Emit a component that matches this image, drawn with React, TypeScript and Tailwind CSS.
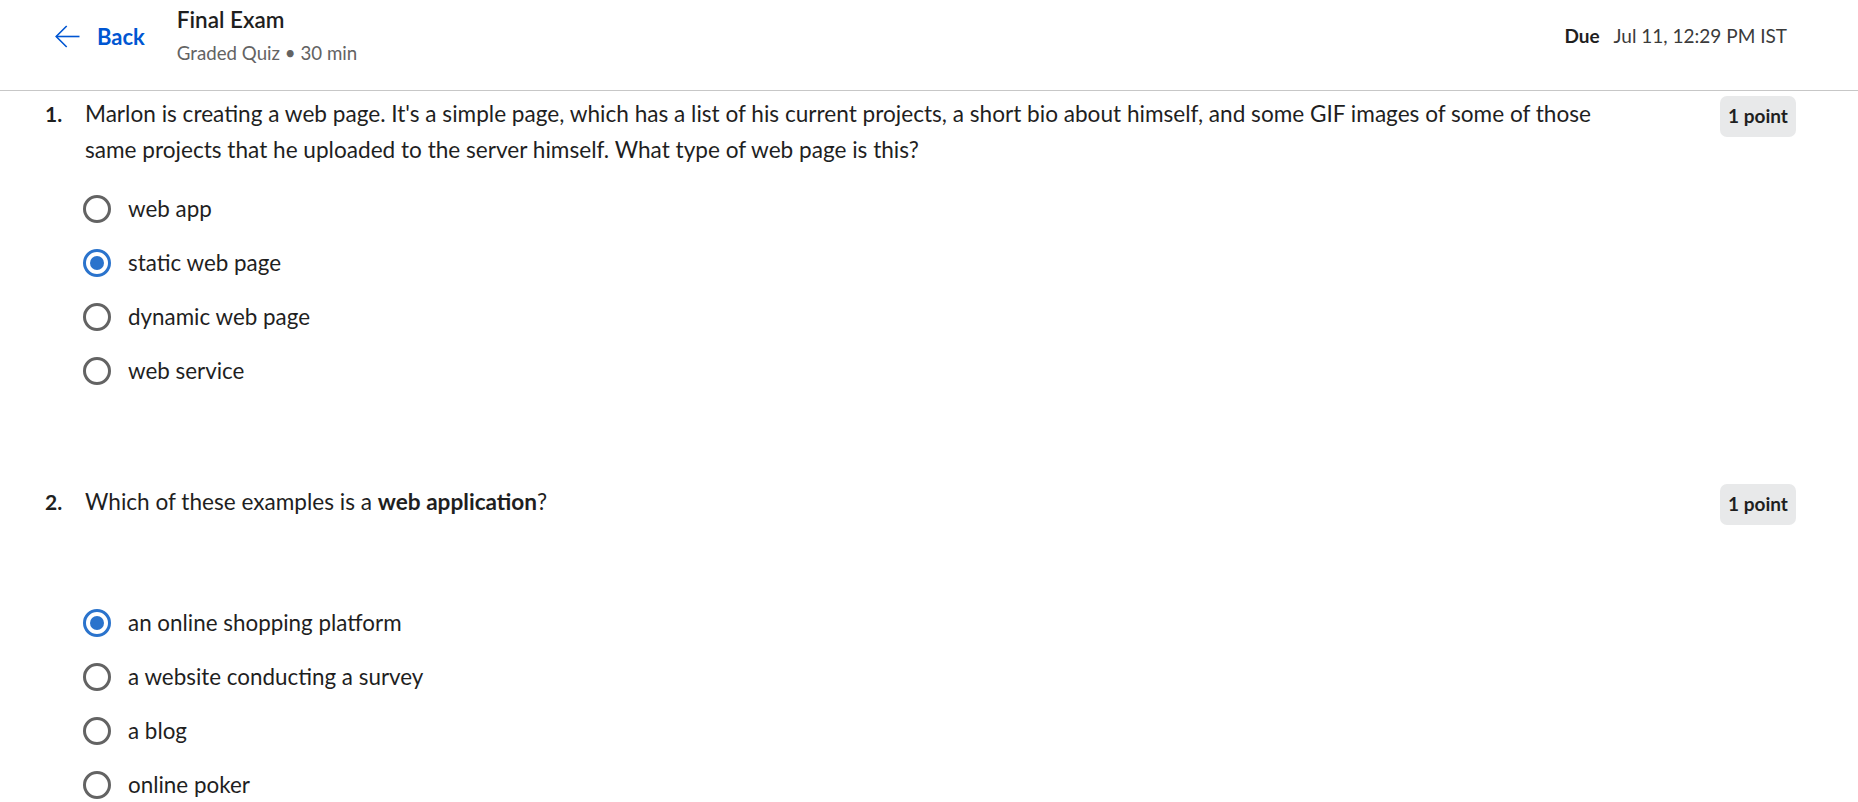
import type { ReactNode } from 'react';

type Question = {
    num: number;
    text: ReactNode;
    options: string[];
    selected: number;
    optionsGap: string;
};

const questions: Question[] = [
    {
        num: 1,
        text: "Marlon is creating a web page. It's a simple page, which has a list of his current projects, a short bio about himself, and some GIF images of some of those same projects that he uploaded to the server himself. What type of web page is this?",
        options: ['web app', 'static web page', 'dynamic web page', 'web service'],
        selected: 1,
        optionsGap: 'mt-[27px]',
    },
    {
        num: 2,
        text: (
            <>
                Which of these examples is a <strong className="font-bold">web application</strong>?
            </>
        ),
        options: ['an online shopping platform', 'a website conducting a survey', 'a blog', 'online poker'],
        selected: 0,
        optionsGap: 'mt-[89px]',
    },
];

function Radio({ checked }: { checked: boolean }) {
    if (checked) {
        return (
            <span className="flex h-[28px] w-[28px] shrink-0 items-center justify-center rounded-full border-[3px] border-[#2a73cc]">
                <span className="h-[14px] w-[14px] rounded-full bg-[#2a73cc]" />
            </span>
        );
    }
    return <span className="h-[28px] w-[28px] shrink-0 rounded-full border-[3px] border-[#636363]" />;
}

function QuestionBlock({ q }: { q: Question }) {
    return (
        <div className="flex">
            <div className="w-[40px] shrink-0 text-[21px] leading-[36px] font-bold text-[#1f1f1f]">{q.num}.</div>
            <div className="flex-1">
                <p className="text-[22.6px] leading-[36px] text-[#1f1f1f]">{q.text}</p>
                <div className={`${q.optionsGap} -ml-[2px] flex flex-col gap-[26px]`}>
                    {q.options.map((opt, i) => (
                        <label key={opt} className="flex h-[28px] items-center gap-[17px]">
                            <Radio checked={i === q.selected} />
                            <span className="text-[22.4px] text-[#1f1f1f]">{opt}</span>
                        </label>
                    ))}
                </div>
            </div>
            <div className="ml-[100px] shrink-0">
                <span className="flex h-[41px] w-[76px] items-center justify-center rounded-[7px] bg-[#e8e9ea] text-[19px] font-bold text-[#1f1f1f]">
                    1 point
                </span>
            </div>
        </div>
    );
}

export default function App() {
    return (
        <div className="min-h-screen bg-white font-['Lato',sans-serif] text-[#1f1f1f]">
            <header className="flex h-[91px] items-start justify-between border-b border-[#c7c7c7] pl-[55px] pr-[71px]">
                <div className="flex items-start">
                    <a className="mt-[25px] flex items-center gap-[17px] text-[#0056d2]">
                        <svg width="25" height="23" viewBox="0 0 25 23" fill="none" stroke="currentColor" strokeWidth="1.6">
                            <path d="M24.5 11.5H1.2" />
                            <path d="M11.7 1 1.2 11.5 11.7 22" />
                        </svg>
                        <span className="text-[22px] leading-[22px] font-bold">Back</span>
                    </a>
                    <div className="ml-[32px] mt-[6px]">
                        <div className="text-[22.5px] leading-[28px] font-semibold">Final Exam</div>
                        <div className="mt-[7px] text-[18.7px] leading-[24px] text-[#636363]">Graded Quiz • 30 min</div>
                    </div>
                </div>
                <div className="mt-[24px] flex items-baseline gap-[14px] text-[19px] leading-[24px]">
                    <span className="font-bold">Due</span>
                    <span className="text-[#3b3b3b]">Jul 11, 12:29 PM IST</span>
                </div>
            </header>
            <main className="flex flex-col gap-[99px] pl-[45px] pr-[62px] pt-[5px]">
                {questions.map((q) => (
                    <QuestionBlock key={q.num} q={q} />
                ))}
            </main>
        </div>
    );
}
